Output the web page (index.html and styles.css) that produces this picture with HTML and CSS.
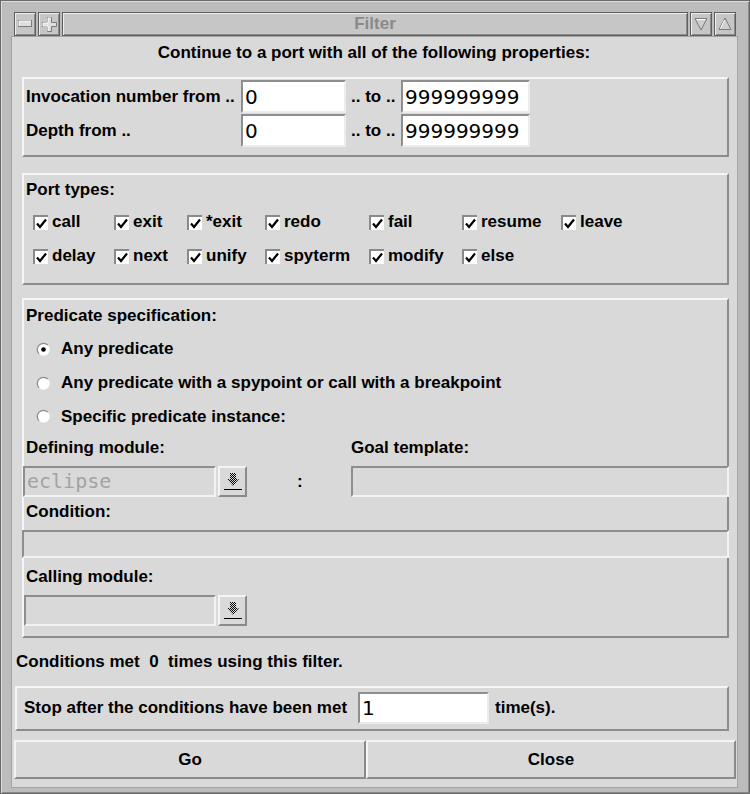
FILE: index.html
```html
<!DOCTYPE html>
<html>
<head>
<meta charset="utf-8">
<title>Filter</title>
<link rel="stylesheet" href="styles.css">
</head>
<body>
<div class="window">
  <div class="titlebar">
    <div class="tbtn"><svg width="14" height="8" viewBox="0 0 14 8"><rect x="0.5" y="0.5" width="13" height="6" fill="#dedede" stroke="#7a7a7a"/><path d="M1 6V1H13" stroke="#fff" fill="none"/></svg></div>
    <div class="tbtn"><svg width="15" height="15" viewBox="0 0 15 15"><path d="M5.5 0.5H9.5V5.5H14.5V9.5H9.5V14.5H5.5V9.5H0.5V5.5H5.5Z" fill="#dedede" stroke="#7a7a7a"/><path d="M6 14V9H1V6H6V1H9" stroke="#fff" fill="none"/></svg></div>
    <div class="ttitle">Filter</div>
    <div class="tbtn"><svg width="14" height="14" viewBox="0 0 14 14"><path d="M1 1.5H13L7 13Z" fill="#cfcfcf" stroke="#7a7a7a"/><path d="M2.5 2.5H11.5" stroke="#fff"/></svg></div>
    <div class="tbtn"><svg width="14" height="14" viewBox="0 0 14 14"><path d="M1 12.5H13L7 1Z" fill="#cfcfcf" stroke="#7a7a7a"/><path d="M6.5 3L2.5 11.5" stroke="#fff"/></svg></div>
  </div>

  <div class="content">
    <div class="heading">Continue to a port with all of the following properties:</div>

    <div class="frame f-range">
      <div class="range-grid">
        <span class="lbl">Invocation number from ..</span>
        <div class="entry">0</div>
        <span class="to">.. to ..</span>
        <div class="entry">999999999</div>
        <span class="lbl">Depth from ..</span>
        <div class="entry">0</div>
        <span class="to">.. to ..</span>
        <div class="entry">999999999</div>
      </div>
    </div>

    <div class="frame f-ports">
      <div class="ftitle">Port types:</div>
      <div class="ports">
        <div class="chk"><span class="cb"><svg width="13" height="13" viewBox="0 0 13 13"><path d="M2 6.5L5 10L11 2.5" stroke="#000" stroke-width="2.2" fill="none"/></svg></span>call</div>
        <div class="chk"><span class="cb"><svg width="13" height="13" viewBox="0 0 13 13"><path d="M2 6.5L5 10L11 2.5" stroke="#000" stroke-width="2.2" fill="none"/></svg></span>exit</div>
        <div class="chk"><span class="cb"><svg width="13" height="13" viewBox="0 0 13 13"><path d="M2 6.5L5 10L11 2.5" stroke="#000" stroke-width="2.2" fill="none"/></svg></span>*exit</div>
        <div class="chk"><span class="cb"><svg width="13" height="13" viewBox="0 0 13 13"><path d="M2 6.5L5 10L11 2.5" stroke="#000" stroke-width="2.2" fill="none"/></svg></span>redo</div>
        <div class="chk"><span class="cb"><svg width="13" height="13" viewBox="0 0 13 13"><path d="M2 6.5L5 10L11 2.5" stroke="#000" stroke-width="2.2" fill="none"/></svg></span>fail</div>
        <div class="chk"><span class="cb"><svg width="13" height="13" viewBox="0 0 13 13"><path d="M2 6.5L5 10L11 2.5" stroke="#000" stroke-width="2.2" fill="none"/></svg></span>resume</div>
        <div class="chk"><span class="cb"><svg width="13" height="13" viewBox="0 0 13 13"><path d="M2 6.5L5 10L11 2.5" stroke="#000" stroke-width="2.2" fill="none"/></svg></span>leave</div>
        <div class="chk"><span class="cb"><svg width="13" height="13" viewBox="0 0 13 13"><path d="M2 6.5L5 10L11 2.5" stroke="#000" stroke-width="2.2" fill="none"/></svg></span>delay</div>
        <div class="chk"><span class="cb"><svg width="13" height="13" viewBox="0 0 13 13"><path d="M2 6.5L5 10L11 2.5" stroke="#000" stroke-width="2.2" fill="none"/></svg></span>next</div>
        <div class="chk"><span class="cb"><svg width="13" height="13" viewBox="0 0 13 13"><path d="M2 6.5L5 10L11 2.5" stroke="#000" stroke-width="2.2" fill="none"/></svg></span>unify</div>
        <div class="chk"><span class="cb"><svg width="13" height="13" viewBox="0 0 13 13"><path d="M2 6.5L5 10L11 2.5" stroke="#000" stroke-width="2.2" fill="none"/></svg></span>spyterm</div>
        <div class="chk"><span class="cb"><svg width="13" height="13" viewBox="0 0 13 13"><path d="M2 6.5L5 10L11 2.5" stroke="#000" stroke-width="2.2" fill="none"/></svg></span>modify</div>
        <div class="chk"><span class="cb"><svg width="13" height="13" viewBox="0 0 13 13"><path d="M2 6.5L5 10L11 2.5" stroke="#000" stroke-width="2.2" fill="none"/></svg></span>else</div>
      </div>
    </div>

    <div class="frame f-pred">
      <div class="ftitle">Predicate specification:</div>
      <div class="radios">
        <div class="radio"><svg width="15" height="15" viewBox="0 0 15 15"><circle cx="7.5" cy="7.5" r="6.2" fill="#fff"/><path d="M3.1 11.9A6.2 6.2 0 0 1 11.9 3.1" stroke="#8e8e8e" stroke-width="1.3" fill="none"/><circle cx="7.5" cy="7.5" r="2.3" fill="#000"/></svg>Any predicate</div>
        <div class="radio"><svg width="15" height="15" viewBox="0 0 15 15"><circle cx="7.5" cy="7.5" r="6.2" fill="#fff"/><path d="M3.1 11.9A6.2 6.2 0 0 1 11.9 3.1" stroke="#8e8e8e" stroke-width="1.3" fill="none"/></svg>Any predicate with a spypoint or call with a breakpoint</div>
        <div class="radio"><svg width="15" height="15" viewBox="0 0 15 15"><circle cx="7.5" cy="7.5" r="6.2" fill="#fff"/><path d="M3.1 11.9A6.2 6.2 0 0 1 11.9 3.1" stroke="#8e8e8e" stroke-width="1.3" fill="none"/></svg>Specific predicate instance:</div>
      </div>
      <div class="modlabels">
        <span>Defining module:</span>
        <span>Goal template:</span>
      </div>
      <div class="modrow">
        <div class="field mod disabled">eclipse</div>
        <div class="ddbtn"><svg width="22" height="22" viewBox="0 0 22 22"><defs><pattern id="chk1" width="2" height="2" patternUnits="userSpaceOnUse"><rect width="1" height="1" fill="#000"/><rect x="1" y="1" width="1" height="1" fill="#000"/></pattern></defs><path d="M8 2H14V8H17L11 15L5 8H8Z" fill="url(#chk1)"/><path d="M2 19L3 18L4 19L5 18L6 19L7 18L8 19L9 18L10 19L11 18L12 19L13 18L14 19L15 18L16 19L17 18L18 19L19 18L20 19" stroke="#000" fill="none" stroke-width="1"/></svg></div>
        <div class="colon">:</div>
        <div class="field goal"></div>
      </div>
      <div class="sublabel cond-lbl">Condition:</div>
      <div class="field cond"></div>
      <div class="sublabel call-lbl">Calling module:</div>
      <div class="callrow">
        <div class="field mod2"></div>
        <div class="ddbtn"><svg width="22" height="22" viewBox="0 0 22 22"><defs><pattern id="chk2" width="2" height="2" patternUnits="userSpaceOnUse"><rect width="1" height="1" fill="#000"/><rect x="1" y="1" width="1" height="1" fill="#000"/></pattern></defs><path d="M8 2H14V8H17L11 15L5 8H8Z" fill="url(#chk2)"/><path d="M2 19L3 18L4 19L5 18L6 19L7 18L8 19L9 18L10 19L11 18L12 19L13 18L14 19L15 18L16 19L17 18L18 19L19 18L20 19" stroke="#000" fill="none" stroke-width="1"/></svg></div>
      </div>
    </div>

    <div class="status">Conditions met&nbsp;&nbsp;0&nbsp;&nbsp;times using this filter.</div>

    <div class="frame f-stop">
      <span class="stoplbl">Stop after the conditions have been met</span>
      <div class="entry stopentry">1</div>
      <span class="times">time(s).</span>
    </div>

    <div class="buttons">
      <div class="btn go">Go</div>
      <div class="btn close">Close</div>
    </div>
  </div>
</div>
</body>
</html>
```

FILE: styles.css
```css
* { box-sizing: border-box; }

body {
  margin: 0;
  background: #d9d9d9;
  font-family: "Liberation Sans", Arial, sans-serif;
  font-weight: bold;
  font-size: 17px;
  color: #000;
}

.window {
  width: 750px;
  height: 794px;
  background: #bcbcbc;
  border: 1px solid #6a6a6a;
  box-shadow: inset 1px 1px 0 #dcdcdc, inset -1px -1px 0 #8a8a8a;
  padding: 11px 12px 6px 11px;
  display: flex;
  flex-direction: column;
}

/* ---------- title bar ---------- */
.titlebar {
  height: 24px;
  margin: 0 1px 1px 2px;
  display: flex;
  gap: 2px;
}

.tbtn,
.ttitle {
  height: 24px;
  background: #c6c6c6;
  border: 1px solid #5e5e5e;
  box-shadow: inset 1px 1px 0 #eeeeee, inset -1px -1px 0 #8c8c8c;
}

.tbtn {
  width: 22px;
  display: flex;
  align-items: center;
  justify-content: center;
}

.ttitle {
  flex: 1;
  text-align: center;
  line-height: 21px;
  color: #8a8a8a;
  font-size: 17px;
}

/* ---------- content ---------- */
.content {
  height: 750px;
  background: #d9d9d9;
  box-shadow: 0 0 0 1px #a4a4a4;
  padding: 0 8px 0 2px;
  display: flex;
  flex-direction: column;
}

.heading {
  margin-top: 6px;
  height: 20px;
  line-height: 20px;
  text-align: center;
  padding-left: 5px;
}

.frame {
  border: 2px solid;
  border-color: #f6f6f6 #8c8c8c #8c8c8c #f6f6f6;
  margin-left: 8px;
  flex: none;
}

.ftitle {
  height: 20px;
  line-height: 20px;
}

/* range */
.f-range {
  margin-top: 14px;
  height: 80px;
  padding: 1px 0 0 2px;
}

.range-grid {
  display: grid;
  grid-template-columns: 215px 105px 55px 129px;
  grid-template-rows: 33px 33px;
  row-gap: 1px;
  align-items: center;
}

.to { padding-left: 5px; }

.entry {
  height: 100%;
  background: #fff;
  border: 2px solid;
  border-color: #8e8e8e #ececec #ececec #8e8e8e;
  font-family: "DejaVu Sans", sans-serif;
  font-weight: normal;
  font-size: 20px;
  padding-left: 2px;
  display: flex;
  align-items: center;
}

/* ports */
.f-ports {
  margin-top: 16px;
  height: 112px;
  padding: 5px 0 0 2px;
}

.ports {
  margin-top: 5px;
  margin-left: 7px;
  display: grid;
  grid-template-columns: 81px 73px 78px 104px 93px 99px 1fr;
  grid-auto-rows: 34px;
  align-items: center;
}

.chk {
  display: flex;
  align-items: center;
  gap: 4px;
}

.cb {
  width: 15px;
  height: 15px;
  background: #fff;
  border-left: 2px solid #8a8a8a;
  border-top: 2px solid #8a8a8a;
  display: flex;
  align-items: center;
  justify-content: center;
}

/* predicate */
.f-pred {
  margin-top: 13px;
  height: 340px;
  padding: 6px 0 0 0;
  display: flex;
  flex-direction: column;
}

.f-pred .ftitle { padding-left: 2px; }

.radios {
  margin-top: 6px;
  display: flex;
  flex-direction: column;
}

.radio {
  height: 34px;
  display: flex;
  align-items: center;
  gap: 10px;
  padding-left: 12px;
}

.radio:last-child { height: 33px; }

.modlabels {
  margin-top: 5px;
  padding-left: 2px;
  display: grid;
  grid-template-columns: 325px 1fr;
  height: 20px;
  line-height: 20px;
}

.modrow {
  margin-top: 8px;
  height: 31px;
  display: flex;
  flex: none;
  margin-right: -2px;
}

.field {
  background: #d9d9d9;
  border: 2px solid;
  border-color: #8e8e8e #f2f2f2 #f2f2f2 #8e8e8e;
}

.mod {
  width: 193px;
  margin-left: -1px;
  height: 31px;
}

.disabled {
  color: #a3a3a3;
  font-family: "DejaVu Sans Mono", monospace;
  font-weight: normal;
  font-size: 20px;
  line-height: 27px;
  padding-left: 2px;
}

.ddbtn {
  width: 29px;
  height: 31px;
  margin-left: 2px;
  background: #d9d9d9;
  border: 2px solid;
  border-color: #f4f4f4 #8a8a8a #8a8a8a #f4f4f4;
  display: flex;
  align-items: center;
  justify-content: center;
}

.colon {
  width: 104px;
  padding-left: 50px;
  line-height: 31px;
}

.goal {
  flex: 1;
  height: 31px;
}

.sublabel {
  height: 20px;
  line-height: 20px;
  padding-left: 2px;
}

.cond-lbl { margin-top: 5px; }

.cond {
  margin: 8px -2px 0 -2px;
  height: 28px;
  flex: none;
}

.call-lbl { margin-top: 9px; }

.callrow {
  margin-top: 8px;
  display: flex;
  height: 31px;
}

.mod2 {
  width: 192px;
  height: 31px;
}

.status {
  margin-top: 14px;
  margin-left: 2px;
  height: 20px;
  line-height: 20px;
}

.f-stop {
  margin-top: 14px;
  margin-left: 1px;
  height: 45px;
  padding: 4px 0 0 7px;
  display: flex;
  align-items: flex-start;
}

.stoplbl {
  width: 334px;
  line-height: 32px;
  white-space: nowrap;
}

.stopentry {
  width: 131px;
  height: 32px;
}

.times {
  margin-left: 6px;
  line-height: 32px;
}

.buttons {
  margin-top: 9px;
  margin-right: -7px;
  display: grid;
  grid-template-columns: 352px 1fr;
  height: 39px;
}

.btn {
  background: #d9d9d9;
  border: 2px solid;
  border-color: #f4f4f4 #8a8a8a #8a8a8a #f4f4f4;
  display: flex;
  align-items: center;
  justify-content: center;
}
```
